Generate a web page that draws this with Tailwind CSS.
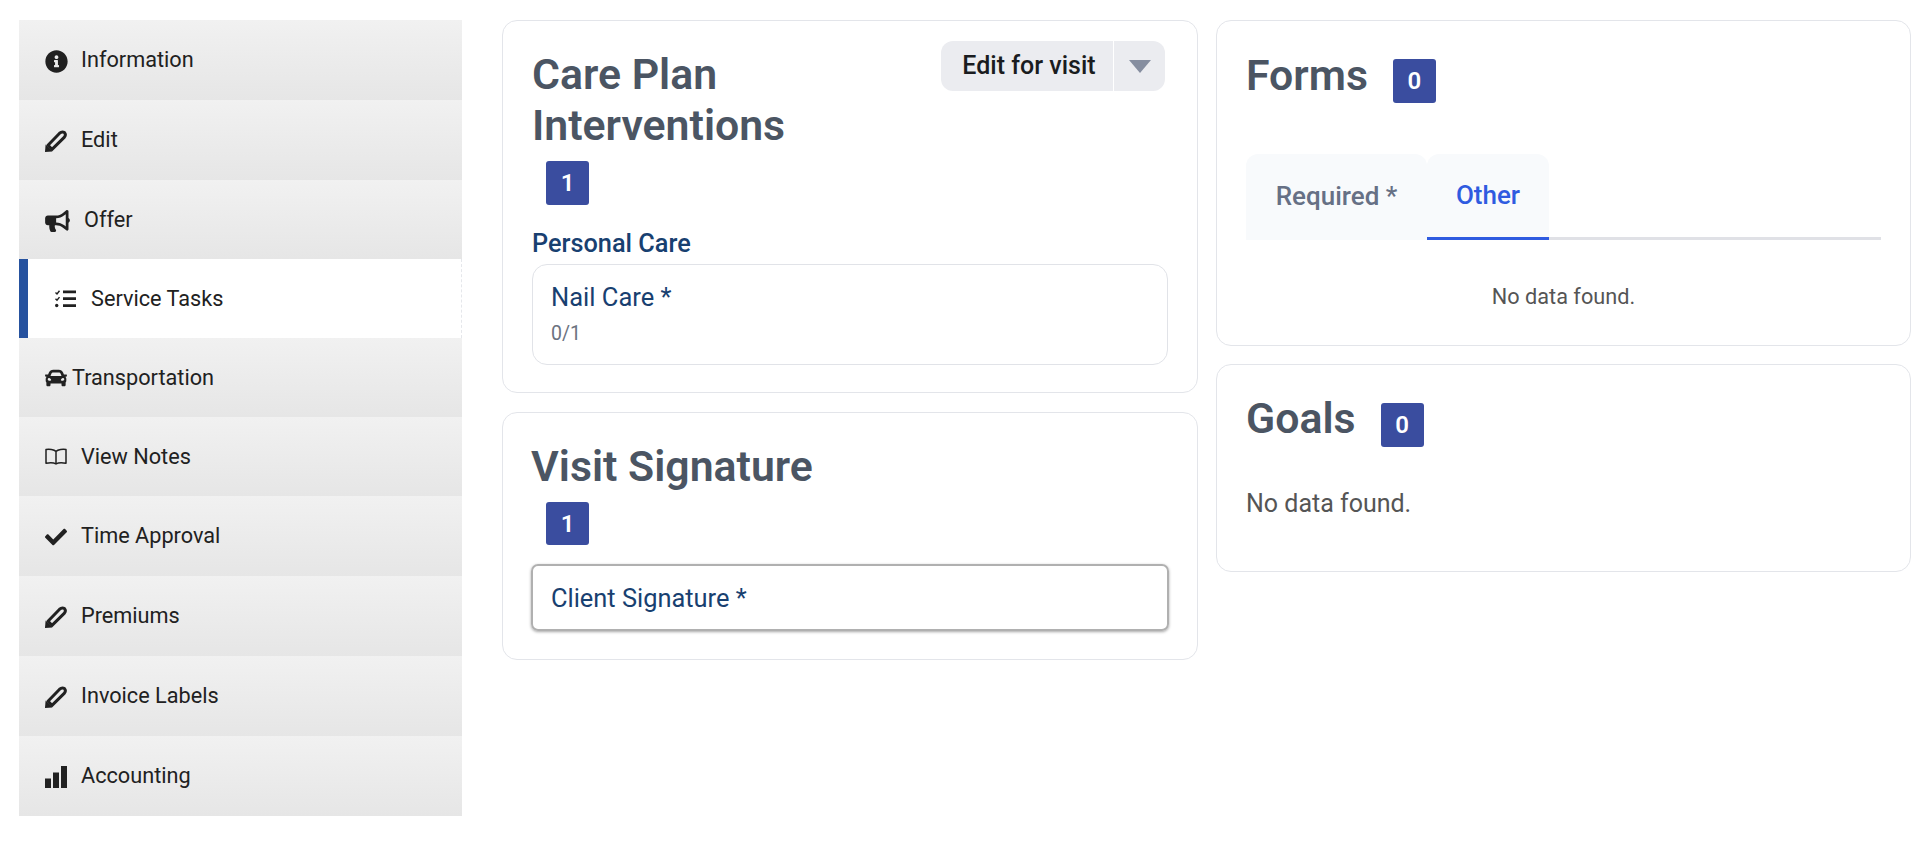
<!DOCTYPE html>
<html lang="en">
<head>
<meta charset="UTF-8" />
<meta name="viewport" content="width=device-width, initial-scale=1.0" />
<script src="https://cdn.jsdelivr.net/npm/@tailwindcss/browser@4"></script>
<title>Visit</title>
</head>
<body class="bg-white font-['Roboto',sans-serif]">
<div class="flex items-start pt-[20px] pl-[19px] pr-[17px]">

    <!-- side menu -->
    <nav class="w-[443px] shrink-0 text-[21.7px] text-[#212121]">
        <a class="flex items-center h-[80px] pl-[26px] bg-linear-to-b from-[#f1f1f1] to-[#e6e6e6]">
            <svg class="w-[23px] h-[23px] mt-[2px] fill-[#212121]" viewBox="0 0 512 512"><path d="M256 8C119.043 8 8 119.083 8 256c0 136.997 111.043 248 248 248s248-111.003 248-248C504 119.083 392.957 8 256 8zm0 110c23.196 0 42 18.804 42 42s-18.804 42-42 42-42-18.804-42-42 18.804-42 42-42zm56 254c0 6.627-5.373 12-12 12h-88c-6.627 0-12-5.373-12-12v-24c0-6.627 5.373-12 12-12h12v-64h-12c-6.627 0-12-5.373-12-12v-24c0-6.627 5.373-12 12-12h64c6.627 0 12 5.373 12 12v100h12c6.627 0 12 5.373 12 12v24z"/></svg>
            <span class="ml-[13px]">Information</span>
        </a>
        <a class="flex items-center h-[80px] pl-[26px] bg-linear-to-b from-[#f1f1f1] to-[#e6e6e6]">
            <svg class="w-[22px] h-[22px] mt-[2px]" viewBox="0 0 22 22"><path d="M0 22 .6 14.5 7.5 21.4Z" fill="#212121"/><path d="M3 15.2 14.6 3.2Q17 1 19.5 2.6 21.4 5 19.2 7.4L7 19.4Z" fill="none" stroke="#212121" stroke-width="3" stroke-linejoin="round"/></svg>
            <span class="ml-[14px]">Edit</span>
        </a>
        <a class="flex items-center h-[79px] pl-[26px] bg-linear-to-b from-[#f1f1f1] to-[#e6e6e6]">
            <svg class="w-[25px] h-[22px] mt-[2px] fill-[#212121]" viewBox="0 0 576 512"><path d="M576 240c0-23.63-12.95-44.04-32-55.12V32.01C544 23.26 537.02 0 512 0c-7.12 0-14.19 2.38-19.98 7.02l-85.03 68.03C364.28 109.19 310.66 128 256 128H64c-35.35 0-64 28.65-64 64v96c0 35.35 28.65 64 64 64h33.7c-1.39 10.48-2.18 21.14-2.18 32 0 39.77 9.26 77.35 25.56 110.94 5.19 10.69 16.52 17.06 28.4 17.06h74.28c26.05 0 41.69-29.84 25.9-50.56-16.4-21.52-26.15-48.36-26.15-77.44 0-11.11 1.62-21.79 4.41-32H256c54.66 0 108.28 18.81 150.98 52.95l85.03 68.03a32.023 32.023 0 0 0 19.98 7.02c24.92 0 32-22.78 32-32V295.13C563.05 284.04 576 263.63 576 240zm-96 141.42l-33.05-26.44C392.95 311.78 325.12 288 256 288v-96c69.12 0 136.95-23.78 190.95-66.98L480 98.58v282.84z"/></svg>
            <span class="ml-[14px] mt-[2px]">Offer</span>
        </a>
        <a class="flex items-center h-[79px] pl-[26px] bg-white border-l-[9px] border-l-[#26529f] border-r border-r-gray-200 [border-right-style:dashed]">
            <svg class="w-[22px] h-[18px]" viewBox="0 0 22 18"><path d="M1.5 2.5 3 4 5.5 .8M1.5 8.8 3 10.3 5.5 7.1" fill="none" stroke="#212121" stroke-width="1.4"/><circle cx="2.7" cy="15.5" r="1.7" fill="#212121"/><path d="M9 .5H22V3.3H9ZM9 7.3H22V10.1H9ZM9 14.2H22V17H9Z" fill="#212121"/></svg>
            <span class="ml-[15px] mt-[2px]">Service Tasks</span>
        </a>
        <a class="flex items-center h-[79px] pl-[26px] bg-linear-to-b from-[#f1f1f1] to-[#e6e6e6]">
            <svg class="w-[22px] h-[22px] fill-[#212121]" viewBox="0 0 512 512"><path d="M499.99 176h-59.87l-16.64-41.6C406.38 91.63 365.57 64 319.5 64h-127c-46.06 0-86.88 27.63-103.99 70.4L71.87 176H12.01C4.2 176-1.53 183.34.37 190.91l6 24C7.7 220.25 12.5 224 18.01 224h20.07C24.65 235.73 16 252.78 16 272v48c0 16.12 6.16 30.67 16 41.93V416c0 17.67 14.33 32 32 32h32c17.67 0 32-14.33 32-32v-32h256v32c0 17.67 14.33 32 32 32h32c17.67 0 32-14.33 32-32v-54.07c9.84-11.25 16-25.8 16-41.93v-48c0-19.22-8.65-36.27-22.07-48H494c5.51 0 10.31-3.75 11.64-9.09l6-24c1.89-7.57-3.84-14.91-11.65-14.91zm-352.06-17.83c7.29-18.22 24.94-30.17 44.57-30.17h127c19.63 0 37.28 11.95 44.57 30.17L384 208H128l19.93-49.83zM96 319.8c-19.2 0-32-12.76-32-31.9S76.8 256 96 256s48 28.71 48 47.85-28.8 15.95-48 15.95zm320 0c-19.2 0-48 3.19-48-15.95S396.8 256 416 256s32 12.76 32 31.9-12.8 31.9-32 31.9z"/></svg>
            <span class="ml-[5px] mt-[2px]">Transportation</span>
        </a>
        <a class="flex items-center h-[79px] pl-[26px] bg-linear-to-b from-[#f1f1f1] to-[#e6e6e6]">
            <svg class="w-[22px] h-[18px]" viewBox="0 0 22 18"><path d="M11 3.5C9 1.5 4 1 1 1.6V15.2C4 14.6 9 14.6 11 16 13 14.6 18 14.6 21 15.2V1.6C18 1 13 1.5 11 3.5ZM11 3.5V16" fill="none" stroke="#212121" stroke-width="1.5" stroke-linejoin="round"/></svg>
            <span class="ml-[14px] mt-[2px]">View Notes</span>
        </a>
        <a class="flex items-center h-[80px] pl-[26px] bg-linear-to-b from-[#f1f1f1] to-[#e6e6e6]">
            <svg class="w-[22px] h-[22px] mt-[2px] fill-[#212121]" viewBox="0 0 512 512"><path d="M173.898 439.404l-166.4-166.4c-9.997-9.997-9.997-26.206 0-36.204l36.203-36.204c9.997-9.998 26.207-9.998 36.204 0L192 312.69 432.095 72.596c9.997-9.997 26.207-9.997 36.204 0l36.203 36.204c9.997 9.997 9.997 26.206 0 36.204l-294.4 294.401c-9.998 9.997-26.207 9.997-36.204-.001z"/></svg>
            <span class="ml-[14px]">Time Approval</span>
        </a>
        <a class="flex items-center h-[80px] pl-[26px] bg-linear-to-b from-[#f1f1f1] to-[#e6e6e6]">
            <svg class="w-[22px] h-[22px] mt-[2px]" viewBox="0 0 22 22"><path d="M0 22 .6 14.5 7.5 21.4Z" fill="#212121"/><path d="M3 15.2 14.6 3.2Q17 1 19.5 2.6 21.4 5 19.2 7.4L7 19.4Z" fill="none" stroke="#212121" stroke-width="3" stroke-linejoin="round"/></svg>
            <span class="ml-[14px]">Premiums</span>
        </a>
        <a class="flex items-center h-[80px] pl-[26px] bg-linear-to-b from-[#f1f1f1] to-[#e6e6e6]">
            <svg class="w-[22px] h-[22px] mt-[2px]" viewBox="0 0 22 22"><path d="M0 22 .6 14.5 7.5 21.4Z" fill="#212121"/><path d="M3 15.2 14.6 3.2Q17 1 19.5 2.6 21.4 5 19.2 7.4L7 19.4Z" fill="none" stroke="#212121" stroke-width="3" stroke-linejoin="round"/></svg>
            <span class="ml-[14px]">Invoice Labels</span>
        </a>
        <a class="flex items-center h-[80px] pl-[26px] bg-linear-to-b from-[#f1f1f1] to-[#e6e6e6]">
            <svg class="w-[22px] h-[22px] mt-[2px] fill-[#212121]" viewBox="0 0 22 22"><path d="M0 12.5H6V22H0ZM8 6.5H14V22H8ZM16 0H22V22H16Z"/></svg>
            <span class="ml-[14px]">Accounting</span>
        </a>
    </nav>

    <!-- middle column -->
    <div class="ml-[40px] w-[696px] shrink-0 flex flex-col gap-[19px]">
        <section class="border border-[#e3e5ea] rounded-[15px] pt-[28px] pb-[27px] pl-[29px] pr-[29px]">
            <div class="flex justify-between items-start">
                <h2 class="w-[300px] text-[42.8px] leading-[51px] font-semibold text-[#4b5563]">Care Plan Interventions</h2>
                <div class="flex h-[50px] -mt-[8px] mr-[3px] bg-[#ebecf0] rounded-[12px]">
                    <button class="w-[172px] pl-[4px] text-[25px] font-medium text-[#1a1c20]">Edit for visit</button>
                    <span class="w-[52px] border-l border-white flex items-center justify-center">
                        <svg class="w-[22px] h-[13px] mt-[1px]" viewBox="0 0 22 13"><path d="M0 0H22L11 13Z" fill="#868ea0"/></svg>
                    </span>
                </div>
            </div>
            <span class="ml-[14px] mt-[10px] flex w-[43px] h-[44px] items-center justify-center rounded-[3px] bg-[#3a4d9f] text-white text-[24px] font-semibold">1</span>
            <h3 class="mt-[24px] text-[25.3px] leading-[30px] font-medium text-[#184070]">Personal Care</h3>
            <div class="mt-[5px] h-[101px] border border-[#e1e3e8] rounded-[15px] pl-[18px] pt-[16px]">
                <p class="text-[25.5px] leading-[32px] text-[#184070]">Nail Care *</p>
                <p class="mt-[7px] text-[19.5px] leading-[28px] text-[#6b7280]">0/1</p>
            </div>
        </section>

        <section class="border border-[#e3e5ea] rounded-[15px] pt-[27px] pb-[28px] pl-[28px] pr-[28px]">
            <h2 class="text-[42.8px] leading-[52px] font-semibold text-[#4b5563]">Visit Signature</h2>
            <span class="ml-[15px] mt-[10px] flex w-[43px] h-[43px] items-center justify-center rounded-[3px] bg-[#3a4d9f] text-white text-[24px] font-semibold">1</span>
            <div class="mt-[19px] h-[67px] flex items-center border-2 border-[#b0b0b0] rounded-[7px] pl-[18px] shadow-[0_1px_3px_rgba(0,0,0,0.35)]">
                <p class="pt-[2px] text-[25.4px] text-[#184070]">Client Signature *</p>
            </div>
        </section>
    </div>

    <!-- right column -->
    <div class="ml-[18px] flex-1 flex flex-col gap-[18px]">
        <section class="h-[326px] border border-[#e3e5ea] rounded-[15px] pt-[28px] px-[29px]">
            <div class="flex items-start">
                <h2 class="text-[42.8px] leading-[52px] font-semibold text-[#4b5563]">Forms</h2>
                <span class="ml-[25px] mt-[10px] flex w-[43px] h-[44px] items-center justify-center rounded-[3px] bg-[#3a4d9f] text-white text-[24px] font-semibold">0</span>
            </div>
            <div class="mt-[51px] flex border-b-[3px] border-[#e0e1e6] h-[86px]">
                <span class="w-[181px] h-[86px] pb-[2px] flex items-center justify-center rounded-t-[12px] bg-[#f8fafc] text-[26px] font-medium text-[#667085]">Required *</span>
                <span class="w-[122px] h-[86px] flex items-center justify-center rounded-t-[12px] bg-[#f8fafc] border-b-[3px] border-[#2f5be0] text-[26px] font-medium text-[#2f5be0]">Other</span>
            </div>
            <p class="mt-[43px] text-center text-[21.7px] leading-[28px] text-[#555]">No data found.</p>
        </section>

        <section class="h-[208px] border border-[#e3e5ea] rounded-[15px] pt-[27px] px-[29px]">
            <div class="flex items-start">
                <h2 class="text-[42.8px] leading-[52px] font-semibold text-[#4b5563]">Goals</h2>
                <span class="ml-[25px] mt-[11px] flex w-[43px] h-[44px] items-center justify-center rounded-[3px] bg-[#3a4d9f] text-white text-[24px] font-semibold">0</span>
            </div>
            <p class="mt-[42px] text-[25px] leading-[30px] text-[#555]">No data found.</p>
        </section>
    </div>
</div>
</body>
</html>
